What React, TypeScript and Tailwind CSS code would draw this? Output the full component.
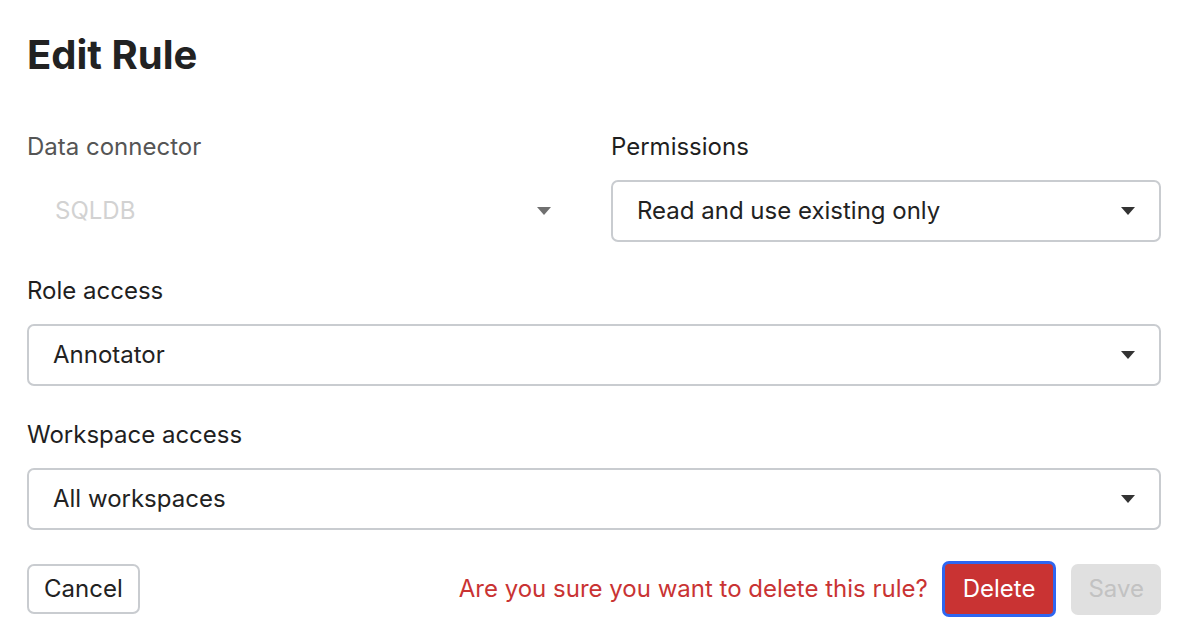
import React from 'react';

const Caret: React.FC<{ className?: string }> = ({ className }) => (
  <svg width="16" height="10" viewBox="0 0 16 10" className={className}>
    <path d="M1 1 L15 1 L8 9 Z" fill="currentColor" />
  </svg>
);

const SelectBox: React.FC<{ value: string; disabled?: boolean }> = ({ value, disabled }) => (
  <div
    className={
      disabled
        ? 'h-[62px] flex items-center justify-between pl-[26px] pr-[23px] border-2 border-transparent rounded-[7px]'
        : 'h-[62px] flex items-center justify-between pl-[24px] pr-[23px] border-2 border-[#c9ccd0] rounded-[7px] bg-white'
    }
  >
    <span className={disabled ? 'text-[#d2d2d2]' : 'text-[#222]'}>{value}</span>
    <Caret className={disabled ? 'text-[#707070]' : 'text-[#333]'} />
  </div>
);

const Field: React.FC<{ label: string; value: string; disabled?: boolean }> = ({ label, value, disabled }) => (
  <div className="flex flex-col">
    <label className={`leading-[30px] mb-[18px] ${disabled ? 'text-[#555]' : 'text-[#1f1f1f]'}`}>{label}</label>
    <SelectBox value={value} disabled={disabled} />
  </div>
);

export default function App() {
  return (
    <div
      className="w-[1186px] h-[638px] bg-white px-[25px] pt-[32px] text-[24px] text-[#222] overflow-hidden"
      style={{ fontFamily: 'Inter, "Noto Sans", sans-serif' }}
    >
      <div className="pl-[2px]">
        <h1 className="text-[40px] leading-[46px] font-bold text-[#222] mb-[54px]">Edit Rule</h1>

        <div className="grid grid-cols-2 gap-x-[34px] mb-[34px]">
          <Field label="Data connector" value="SQLDB" disabled />
          <Field label="Permissions" value="Read and use existing only" />
        </div>

        <div className="mb-[34px]">
          <Field label="Role access" value="Annotator" />
        </div>

        <div className="mb-[31px]">
          <Field label="Workspace access" value="All workspaces" />
        </div>

        <div className="flex items-center justify-between">
          <button className="h-[50px] px-[15px] border-2 border-[#c9ccd0] rounded-[7px] bg-white text-[#222]">
            Cancel
          </button>
          <div className="flex items-center">
            <span className="text-[#c93333] mr-[14px]">Are you sure you want to delete this rule?</span>
            <button className="h-[56px] px-[18px] rounded-[7px] bg-[#c93333] text-white border-[3px] border-[#2f66f0] mr-[15px]">
              Delete
            </button>
            <button className="h-[51px] px-[17px] rounded-[7px] bg-[#e0e0e0] text-[#c2c2c2]">Save</button>
          </div>
        </div>
      </div>
    </div>
  );
}
